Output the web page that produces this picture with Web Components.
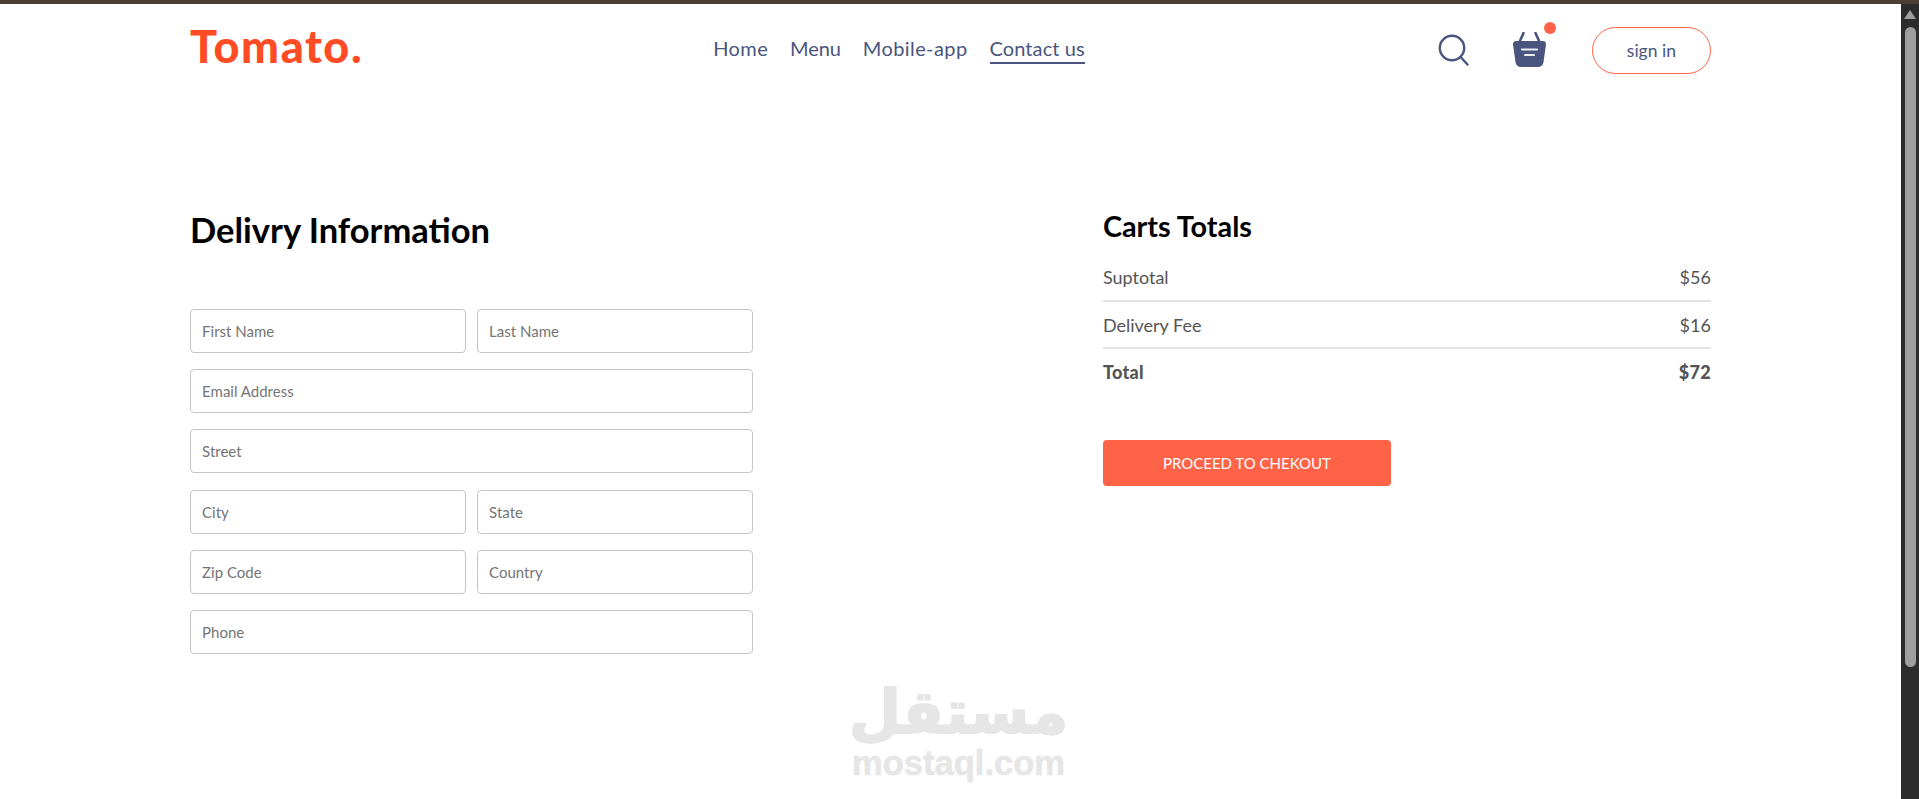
<!DOCTYPE html>
<html lang="en">
<head>
<meta charset="utf-8">
<title>Tomato</title>
<style>
    html, body { margin: 0; height: 100%; overflow: hidden; background: #fff; }
    body { font-family: Lato, "Noto Sans", sans-serif; }
    #shell { display: flex; flex-direction: column; height: 799px; }
    #row { display: flex; flex: 1; min-height: 0; }
    #page { flex: 1; min-width: 0; position: relative; }
    #strip { height: 4px; background: #4b3f35; }
</style>
</head>
<body>
<div id="shell">
    <div id="strip"></div>
    <div id="row">
        <div id="page">
            <site-navbar></site-navbar>
            <place-order>
                <delivery-form slot="left"></delivery-form>
                <cart-totals slot="right"></cart-totals>
            </place-order>
            <site-watermark></site-watermark>
        </div>
        <fake-scrollbar></fake-scrollbar>
    </div>
</div>

<script>
class SiteNavbar extends HTMLElement {
    constructor() {
        super();
        this.attachShadow({ mode: "open" });
        this.shadowRoot.innerHTML = `
        <style>
            :host {
                display: flex;
                justify-content: space-between;
                align-items: center;
                width: 80%;
                margin: 0 auto;
                height: 92px;
                color: #49557e;
            }
            .logo {
                width: 170px;
                padding-bottom: 7px;
                font-size: 45px;
                font-weight: 900;
                line-height: 1;
                color: #ff4c24;
                letter-spacing: 1.6px;
                white-space: nowrap;
            }
            nav { display: flex; gap: 22px; font-size: 20px; letter-spacing: 0.1px; }
            nav a { padding-bottom: 2px; border-bottom: 2px solid transparent; white-space: nowrap; }
            nav a.home { letter-spacing: 0.4px; }
            nav a.menu { letter-spacing: -0.1px; }
            nav a.mobile { letter-spacing: 0.4px; }
            nav a.active { border-bottom-color: #49557e; }
            .right { display: flex; align-items: center; }
            .search { display: block; margin-right: 44px; }
            .basket { position: relative; width: 33px; height: 36px; margin-right: 46px; }
            .basket svg { display: block; }
            .dot {
                position: absolute;
                top: -10px;
                right: -10px;
                width: 12px;
                height: 12px;
                border-radius: 50%;
                background: #ff6347;
            }
            button {
                width: 119px;
                height: 47px;
                border: 1px solid #ff6347;
                border-radius: 50px;
                background: transparent;
                color: #49557e;
                font: inherit;
                font-size: 17.500px;
            }
        </style>
        <div class="logo">Tomato.</div>
        <nav>
            <a class="home">Home</a>
            <a class="menu">Menu</a>
            <a class="mobile">Mobile-app</a>
            <a class="active">Contact us</a>
        </nav>
        <div class="right">
            <svg class="search" width="31" height="32" viewBox="0 0 31 32" fill="none" stroke="#49557e" stroke-width="2.4" stroke-linecap="round">
                <circle cx="14" cy="14" r="12.2"/>
                <path d="M23 23.5L29.5 30.5"/>
            </svg>
            <div class="basket">
                <svg width="33" height="36" viewBox="0 0 33 36">
                    <path d="M10.5 1L6.5 10M22.500 1L26.500 10" stroke="#49557e" stroke-width="2.600" stroke-linecap="round" fill="none"/>
                    <path d="M3 9H30C32 9 33 10.500 33 12.500L30.500 30C30 33.500 28 35 25 35H8C5 35 3 33.500 2.500 30L0 12.500C0 10.500 1 9 3 9Z" fill="#49557e"/>
                    <path d="M9 17.500H24" stroke="#fff" stroke-opacity="0.9" stroke-width="2.200" stroke-linecap="round"/>
                    <path d="M12 23H21" stroke="#fff" stroke-opacity="0.9" stroke-width="2.200" stroke-linecap="round"/>
                </svg>
                <div class="dot"></div>
            </div>
            <button>sign in</button>
        </div>
        `;
    }
}

class PlaceOrder extends HTMLElement {
    constructor() {
        super();
        this.attachShadow({ mode: "open" });
        this.shadowRoot.innerHTML = `
        <style>
            :host {
                display: flex;
                justify-content: space-between;
                align-items: flex-start;
                width: 80%;
                margin: 112px auto 0;
            }
        </style>
        <slot name="left"></slot>
        <slot name="right"></slot>
        `;
    }
}

class FormField extends HTMLElement {
    constructor() {
        super();
        this.attachShadow({ mode: "open" });
        this.shadowRoot.innerHTML = `
        <style>
            :host { display: block; flex: 1; min-width: 0; }
            input {
                display: block;
                box-sizing: border-box;
                width: 100%;
                height: 44px;
                padding: 0 11px;
                border: 1px solid #c5c5c5;
                border-radius: 4px;
                outline: none;
                font-family: inherit;
                font-size: 15px;
            }
            input::placeholder { color: #757575; opacity: 1; }
        </style>
        <input type="text" placeholder="${this.getAttribute("label") || ""}">
        `;
    }
}

class DeliveryForm extends HTMLElement {
    constructor() {
        super();
        this.attachShadow({ mode: "open" });
        this.shadowRoot.innerHTML = `
        <style>
            :host { display: flex; flex-direction: column; width: 563px; }
            h2 {
                margin: 0 0 56.500px;
                font-size: 34.500px;
                line-height: 44px;
                font-weight: 700;
                color: #000;
            }
            .rows { display: flex; flex-direction: column; gap: 16.400px; }
            .pair { display: flex; gap: 11px; }
        </style>
        <h2>Delivry Information</h2>
        <div class="rows">
            <div class="pair"><form-field label="First Name"></form-field><form-field label="Last Name"></form-field></div>
            <form-field label="Email Address"></form-field>
            <form-field label="Street"></form-field>
            <div class="pair"><form-field label="City"></form-field><form-field label="State"></form-field></div>
            <div class="pair"><form-field label="Zip Code"></form-field><form-field label="Country"></form-field></div>
            <form-field label="Phone"></form-field>
        </div>
        `;
    }
}

class CartTotals extends HTMLElement {
    constructor() {
        super();
        this.attachShadow({ mode: "open" });
        this.shadowRoot.innerHTML = `
        <style>
            :host { display: flex; flex-direction: column; width: 608px; color: #555; }
            h2 {
                margin: 0 0 11px;
                font-size: 28.800px;
                line-height: 36px;
                font-weight: 700;
                color: #000;
            }
            .line {
                display: flex;
                justify-content: space-between;
                font-size: 18px;
                line-height: 24px;
                padding: 10px 0 11px;
            }
            .fee { padding: 9px 0 10px; }
            hr { width: 100%; margin: 0 0 2px; border: none; height: 2px; background: #e2e2e2; }
            .total { font-weight: 900; letter-spacing: 0.3px; padding: 9px 0; }
            button {
                align-self: flex-start;
                width: 288px;
                height: 46px;
                margin-top: 47px;
                border: none;
                border-radius: 4px;
                background: #ff6347;
                color: #fff;
                font-family: inherit;
                font-size: 15px;
            }
        </style>
        <h2>Carts Totals</h2>
        <div class="line"><span>Suptotal</span><span>$56</span></div>
        <hr>
        <div class="line fee"><span>Delivery Fee</span><span>$16</span></div>
        <hr>
        <div class="line total"><span>Total</span><span>$72</span></div>
        <button>PROCEED TO CHEKOUT</button>
        `;
    }
}

class SiteWatermark extends HTMLElement {
    constructor() {
        super();
        this.attachShadow({ mode: "open" });
        // lies over the page, like the stamp in the screenshot
        this.shadowRoot.innerHTML = `
        <style>
            :host {
                position: absolute;
                left: 853px;
                top: 675px;
                width: 211px;
                display: flex;
                flex-direction: column;
                align-items: center;
                color: #e6e6e6;
                pointer-events: none;
            }
            .ar {
                font-family: "DejaVu Sans", sans-serif;
                font-weight: 700;
                font-size: 60px;
                line-height: 66px;
                white-space: nowrap;
                -webkit-text-stroke: 2px #e6e6e6;
            }
            .en {
                font-family: "Liberation Sans", sans-serif;
                font-weight: 700;
                font-size: 34.500px;
                line-height: 36px;
                white-space: nowrap;
                -webkit-text-stroke: 0.6px #e6e6e6;
            }
        </style>
        <div class="ar" lang="ar" dir="rtl">مستقل</div>
        <div class="en">mostaql.com</div>
        `;
    }
}

class FakeScrollbar extends HTMLElement {
    constructor() {
        super();
        this.attachShadow({ mode: "open" });
        this.shadowRoot.innerHTML = `
        <style>
            :host {
                display: flex;
                flex-direction: column;
                align-items: center;
                flex: none;
                box-sizing: border-box;
                width: 18px;
                padding-top: 6px;
                background: #2c2c2c;
            }
            .arrow {
                width: 0;
                height: 0;
                border-left: 6px solid transparent;
                border-right: 6px solid transparent;
                border-bottom: 9px solid #9f9f9f;
            }
            .thumb {
                width: 11px;
                height: 640px;
                margin-top: 8px;
                border-radius: 6px;
                background: #9f9f9f;
            }
        </style>
        <div class="arrow"></div>
        <div class="thumb"></div>
        `;
    }
}

customElements.define("site-navbar", SiteNavbar);
customElements.define("place-order", PlaceOrder);
customElements.define("form-field", FormField);
customElements.define("delivery-form", DeliveryForm);
customElements.define("cart-totals", CartTotals);
customElements.define("site-watermark", SiteWatermark);
customElements.define("fake-scrollbar", FakeScrollbar);
</script>
</body>
</html>
